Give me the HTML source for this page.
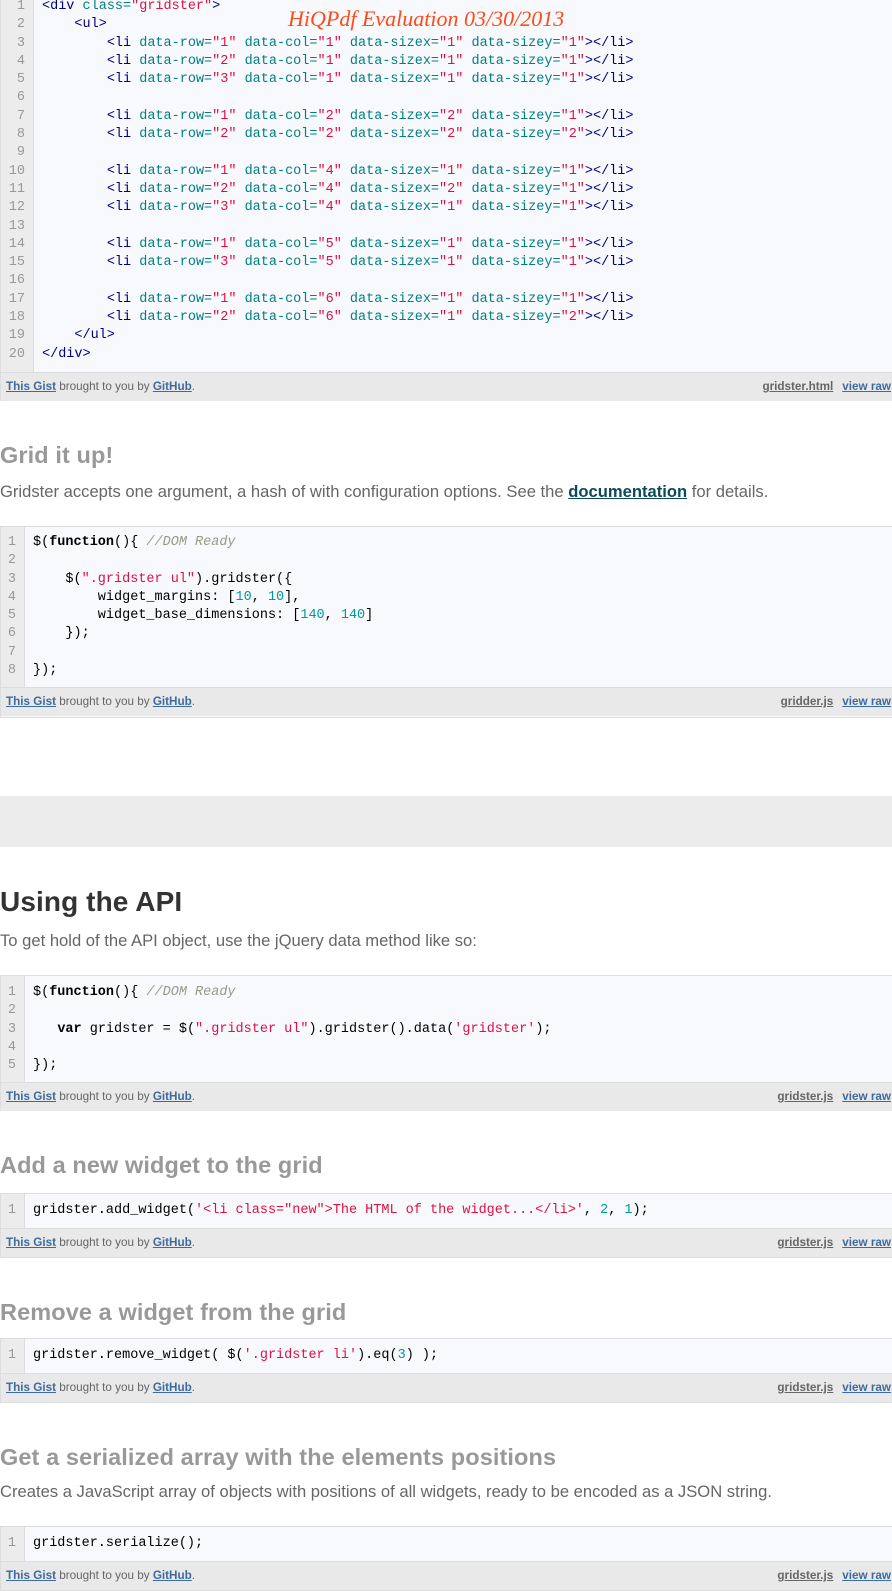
<!DOCTYPE html>
<html><head><meta charset="utf-8"><style>
*{margin:0;padding:0;box-sizing:border-box}
body{width:892px;height:1582px;overflow:hidden;background:#fff;position:relative;font-family:"Liberation Sans",Arial,sans-serif}
.g{position:absolute;left:0;width:900px;border:1px solid #ddd;background:#f8f9fd}
.code{display:flex;font-family:"Liberation Mono",monospace;font-size:13.5px;line-height:18.3px;color:#000}
.gut{background:#ececec;border-right:1px solid #ddd;color:#999;text-align:right;padding-right:8px;white-space:pre}
.src{white-space:pre;padding-left:8px}
.ft{background:#e9e9e9;border-top:1px solid #ddd;height:29px;font-size:11.7px;color:#666;line-height:28px;padding-left:5px;position:relative}
.ft b{color:#3e6b9e;text-decoration:underline}
.ft .r{position:absolute;right:8px;top:0}
.ft .r b.f{color:#666;margin-right:9px}
.t{color:#000080}.a{color:#008080}.s{color:#dd1144}.n{color:#009999}.k{font-weight:bold}.c{color:#999988;font-style:italic}
h2{position:absolute;left:0;font-size:23.5px;color:#999;font-weight:bold;line-height:28px;letter-spacing:0.1px}
p{position:absolute;left:0;font-size:16.6px;color:#666;line-height:20px}
</style></head><body>

<div class="g" style="top:-4px;height:405px">
<div class="code" style="height:375px;padding-top:1px">
<div class="gut" style="width:33px">1
2
3
4
5
6
7
8
9
10
11
12
13
14
15
16
17
18
19
20</div>
<div class="src"><span class="t">&lt;div</span> <span class="a">class=</span><span class="s">"gridster"</span><span class="t">&gt;</span>
    <span class="t">&lt;ul&gt;</span>
        <span class="t">&lt;li</span> <span class="a">data-row=</span><span class="s">"1"</span> <span class="a">data-col=</span><span class="s">"1"</span> <span class="a">data-sizex=</span><span class="s">"1"</span> <span class="a">data-sizey=</span><span class="s">"1"</span><span class="t">&gt;&lt;/li&gt;</span>
        <span class="t">&lt;li</span> <span class="a">data-row=</span><span class="s">"2"</span> <span class="a">data-col=</span><span class="s">"1"</span> <span class="a">data-sizex=</span><span class="s">"1"</span> <span class="a">data-sizey=</span><span class="s">"1"</span><span class="t">&gt;&lt;/li&gt;</span>
        <span class="t">&lt;li</span> <span class="a">data-row=</span><span class="s">"3"</span> <span class="a">data-col=</span><span class="s">"1"</span> <span class="a">data-sizex=</span><span class="s">"1"</span> <span class="a">data-sizey=</span><span class="s">"1"</span><span class="t">&gt;&lt;/li&gt;</span>

        <span class="t">&lt;li</span> <span class="a">data-row=</span><span class="s">"1"</span> <span class="a">data-col=</span><span class="s">"2"</span> <span class="a">data-sizex=</span><span class="s">"2"</span> <span class="a">data-sizey=</span><span class="s">"1"</span><span class="t">&gt;&lt;/li&gt;</span>
        <span class="t">&lt;li</span> <span class="a">data-row=</span><span class="s">"2"</span> <span class="a">data-col=</span><span class="s">"2"</span> <span class="a">data-sizex=</span><span class="s">"2"</span> <span class="a">data-sizey=</span><span class="s">"2"</span><span class="t">&gt;&lt;/li&gt;</span>

        <span class="t">&lt;li</span> <span class="a">data-row=</span><span class="s">"1"</span> <span class="a">data-col=</span><span class="s">"4"</span> <span class="a">data-sizex=</span><span class="s">"1"</span> <span class="a">data-sizey=</span><span class="s">"1"</span><span class="t">&gt;&lt;/li&gt;</span>
        <span class="t">&lt;li</span> <span class="a">data-row=</span><span class="s">"2"</span> <span class="a">data-col=</span><span class="s">"4"</span> <span class="a">data-sizex=</span><span class="s">"2"</span> <span class="a">data-sizey=</span><span class="s">"1"</span><span class="t">&gt;&lt;/li&gt;</span>
        <span class="t">&lt;li</span> <span class="a">data-row=</span><span class="s">"3"</span> <span class="a">data-col=</span><span class="s">"4"</span> <span class="a">data-sizex=</span><span class="s">"1"</span> <span class="a">data-sizey=</span><span class="s">"1"</span><span class="t">&gt;&lt;/li&gt;</span>

        <span class="t">&lt;li</span> <span class="a">data-row=</span><span class="s">"1"</span> <span class="a">data-col=</span><span class="s">"5"</span> <span class="a">data-sizex=</span><span class="s">"1"</span> <span class="a">data-sizey=</span><span class="s">"1"</span><span class="t">&gt;&lt;/li&gt;</span>
        <span class="t">&lt;li</span> <span class="a">data-row=</span><span class="s">"3"</span> <span class="a">data-col=</span><span class="s">"5"</span> <span class="a">data-sizex=</span><span class="s">"1"</span> <span class="a">data-sizey=</span><span class="s">"1"</span><span class="t">&gt;&lt;/li&gt;</span>

        <span class="t">&lt;li</span> <span class="a">data-row=</span><span class="s">"1"</span> <span class="a">data-col=</span><span class="s">"6"</span> <span class="a">data-sizex=</span><span class="s">"1"</span> <span class="a">data-sizey=</span><span class="s">"1"</span><span class="t">&gt;&lt;/li&gt;</span>
        <span class="t">&lt;li</span> <span class="a">data-row=</span><span class="s">"2"</span> <span class="a">data-col=</span><span class="s">"6"</span> <span class="a">data-sizex=</span><span class="s">"1"</span> <span class="a">data-sizey=</span><span class="s">"2"</span><span class="t">&gt;&lt;/li&gt;</span>
    <span class="t">&lt;/ul&gt;</span>
<span class="t">&lt;/div&gt;</span></div>
</div>
<div class="ft"><b>This Gist</b> brought to you by <b>GitHub</b>.<span class="r"><b class="f">gridster.html</b><b>view raw</b></span></div>
</div>

<div style="position:absolute;left:288px;top:6px;font-family:'Liberation Serif',serif;font-style:italic;font-size:22px;color:#ff4a1a;line-height:26px">HiQPdf Evaluation 03/30/2013</div>

<h2 style="top:441px">Grid it up!</h2>
<p style="top:482px">Gridster accepts one argument, a hash of with configuration options. See the <b style="color:#0d4a58;text-decoration:underline">documentation</b> for details.</p>

<div class="g" style="top:526px;height:192px">
<div class="code" style="height:160px;padding-top:7px">
<div class="gut" style="width:24px;margin-top:-7px;padding-top:7px">1
2
3
4
5
6
7
8</div>
<div class="src">$(<span class="k">function</span>(){ <span class="c">//DOM Ready</span>

    $(<span class="s">".gridster ul"</span>).gridster({
        widget_margins: [<span class="n">10</span>, <span class="n">10</span>],
        widget_base_dimensions: [<span class="n">140</span>, <span class="n">140</span>]
    });

});</div>
</div>
<div class="ft"><b>This Gist</b> brought to you by <b>GitHub</b>.<span class="r"><b class="f">gridder.js</b><b>view raw</b></span></div>
</div>

<div style="position:absolute;left:0;top:796px;width:892px;height:51px;background:#ececec"></div>

<h2 style="top:886px;font-size:28px;color:#333;line-height:32px">Using the API</h2>
<p style="top:931px">To get hold of the API object, use the jQuery data method like so:</p>

<div class="g" style="top:975px;height:136px">
<div class="code" style="height:106px;padding-top:8px">
<div class="gut" style="width:24px;margin-top:-8px;padding-top:8px">1
2
3
4
5</div>
<div class="src">$(<span class="k">function</span>(){ <span class="c">//DOM Ready</span>

   <span class="k">var</span> gridster = $(<span class="s">".gridster ul"</span>).gridster().data(<span class="s">'gridster'</span>);

});</div>
</div>
<div class="ft"><b>This Gist</b> brought to you by <b>GitHub</b>.<span class="r"><b class="f">gridster.js</b><b>view raw</b></span></div>
</div>

<h2 style="top:1151px">Add a new widget to the grid</h2>
<div class="g" style="top:1193px;height:65px">
<div class="code" style="height:34px">
<div class="gut" style="width:24px;padding-top:8px">1</div>
<div class="src" style="padding-top:8px">gridster.add_widget(<span class="s">'&lt;li class="new"&gt;The HTML of the widget...&lt;/li&gt;'</span>, <span class="n">2</span>, <span class="n">1</span>);</div>
</div>
<div class="ft"><b>This Gist</b> brought to you by <b>GitHub</b>.<span class="r"><b class="f">gridster.js</b><b>view raw</b></span></div>
</div>

<h2 style="top:1298px">Remove a widget from the grid</h2>
<div class="g" style="top:1338px;height:65px">
<div class="code" style="height:34px">
<div class="gut" style="width:24px;padding-top:8px">1</div>
<div class="src" style="padding-top:8px">gridster.remove_widget( $(<span class="s">'.gridster li'</span>).eq(<span class="n">3</span>) );</div>
</div>
<div class="ft"><b>This Gist</b> brought to you by <b>GitHub</b>.<span class="r"><b class="f">gridster.js</b><b>view raw</b></span></div>
</div>

<h2 style="top:1443px">Get a serialized array with the elements positions</h2>
<p style="top:1482px">Creates a JavaScript array of objects with positions of all widgets, ready to be encoded as a JSON string.</p>
<div class="g" style="top:1526px;height:65px">
<div class="code" style="height:34px">
<div class="gut" style="width:24px;padding-top:8px">1</div>
<div class="src" style="padding-top:8px">gridster.serialize();</div>
</div>
<div class="ft"><b>This Gist</b> brought to you by <b>GitHub</b>.<span class="r"><b class="f">gridster.js</b><b>view raw</b></span></div>
</div>

</body></html>
